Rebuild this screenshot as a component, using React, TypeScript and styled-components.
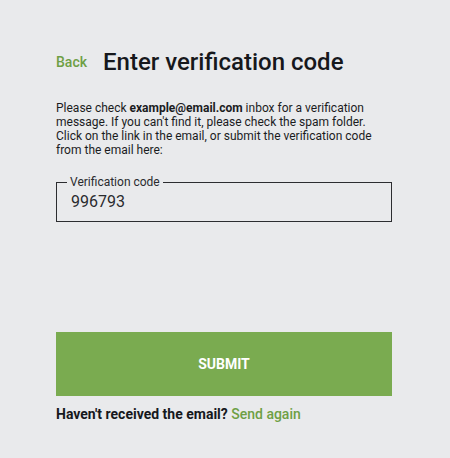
import styled, { createGlobalStyle } from "styled-components"

const GlobalStyle = createGlobalStyle`
    html, body {
        margin: 0;
        padding: 0;
        background: #e9eaec;
        font-family: Roboto, "Liberation Sans", sans-serif;
        color: #1b1c1e;
    }
`

const App = () => {
    return (
        <>
            <GlobalStyle />
            <Page>
                <Header>
                    <BackLink href="#">Back</BackLink>
                    <Title>Enter verification code</Title>
                </Header>
                <Message>
                    Please check <strong>example@email.com</strong> inbox for a verification message. If you can't find it, please check the spam folder. Click on the link in the email, or submit the verification code from the email here:
                </Message>
                <Field>
                    <Legend>Verification code</Legend>
                    <CodeInput defaultValue="996793" autoFocus />
                </Field>
                <SubmitButton type="button">SUBMIT</SubmitButton>
                <Footer>
                    Haven't received the email? <GreenLink href="#">Send again</GreenLink>
                </Footer>
            </Page>
        </>
    )
}

const Page = styled.div`
    width: 336px;
    padding: 46px 0 0 56px;
    display: flex;
    flex-direction: column;
`

const Header = styled.div`
    display: flex;
    align-items: center;
    gap: 16px;
    height: 32px;
`

const GreenLink = styled.a`
    color: #6e9f45;
    text-decoration: none;
    font-weight: 500;
`

const BackLink = styled(GreenLink)`
    font-size: 14px;
`

const Title = styled.h1`
    margin: 0;
    font-size: 24px;
    font-weight: 500;
    color: #16181c;
`

const Message = styled.p`
    margin: 23px 0 0;
    font-size: 12px;
    line-height: 14px;
    color: #1b1c1e;

    strong {
        font-weight: 700;
    }
`

const Field = styled.fieldset`
    margin: 18px 0 0;
    padding: 0 14px 10px;
    border: 1px solid #2c2d30;
    border-radius: 0;
    box-sizing: border-box;
    height: 47px;
`

const Legend = styled.legend`
    padding: 0 3px;
    margin-left: -4px;
    font-size: 12px;
    color: #2a2b2e;
`

const CodeInput = styled.input`
    width: 100%;
    border: none;
    background: transparent;
    outline: none;
    padding: 3px 0 0;
    font-family: Roboto, "Liberation Sans", sans-serif;
    font-size: 16px;
    color: #2a2b2e;
    caret-color: #111;
`

const SubmitButton = styled.button`
    margin-top: 110px;
    height: 64px;
    border: none;
    background: #7aab50;
    color: #fff;
    font-family: Roboto, "Liberation Sans", sans-serif;
    font-size: 14px;
    font-weight: 700;
    cursor: pointer;
`

const Footer = styled.div`
    margin-top: 10px;
    font-size: 14px;
    font-weight: 700;
    color: #16181c;
`

export default App
